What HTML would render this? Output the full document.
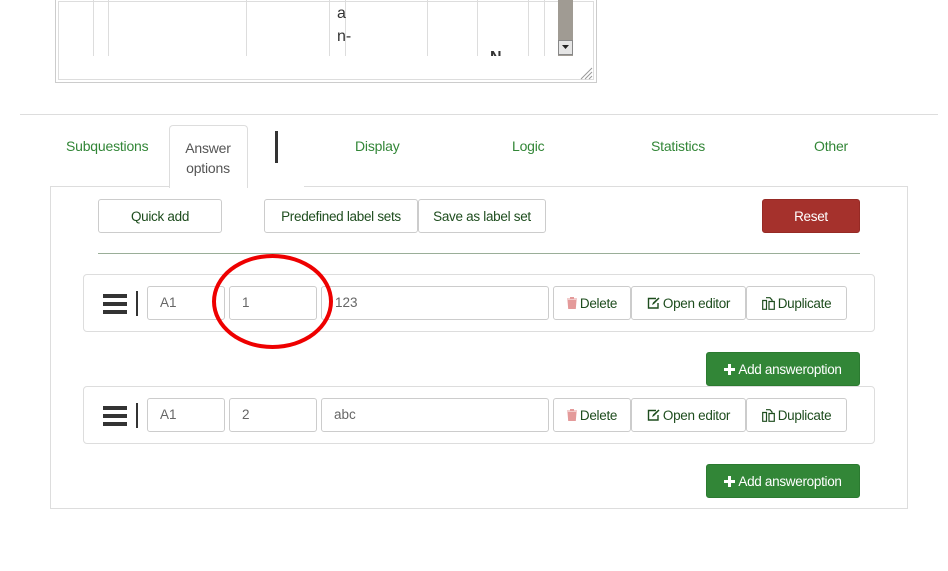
<!DOCTYPE html>
<html><head><meta charset="utf-8"><style>
*{box-sizing:border-box}
body{margin:0;width:948px;height:571px;background:#fff;font-family:"Liberation Sans",sans-serif;position:relative;overflow:hidden;color:#333}
.a{position:absolute}
.vl{position:absolute;top:0;height:56px;width:1px;background:#ddd}
.btn{position:absolute;border:1px solid #ccc;border-radius:3px;background:#fff;color:#1e4d1e;font-size:13.5px;letter-spacing:-0.3px;display:flex;align-items:center;justify-content:center;height:34px}
.btn svg{margin-right:3px}
.inp{position:absolute;border:1px solid #ccc;border-radius:3px;height:34px;font-size:13.5px;color:#666;padding-left:12px;line-height:32px}
.row{position:absolute;left:83px;width:792px;height:58px;border:1px solid #ddd;border-radius:4px}
.green{background:#328637;color:#fff;border-color:#2b7a30}
.tab{position:absolute;color:#328637;font-size:14px;letter-spacing:-0.2px}
</style></head><body>
<div class="a" style="left:55px;top:-2px;width:542px;height:85px;border:1px solid #ccc;box-shadow:inset 0 0 0 2px #fff,inset 0 0 0 3px #ddd"></div>
<div class="vl" style="left:93px"></div><div class="vl" style="left:108px"></div><div class="vl" style="left:246px"></div><div class="vl" style="left:329px"></div><div class="vl" style="left:345px"></div><div class="vl" style="left:427px"></div><div class="vl" style="left:477px"></div><div class="vl" style="left:528px"></div><div class="vl" style="left:544px"></div>
<div class="a" style="left:337px;top:5px;font-size:16px">a</div>
<div class="a" style="left:337px;top:28px;font-size:16px">n-</div>
<div class="a" style="left:490px;top:49px;font-size:16px;height:7px;overflow:hidden;font-weight:bold">N</div>
<div class="a" style="left:558px;top:0;width:15px;height:56px;background:#a09b93"></div>
<div class="a" style="left:558px;top:40px;width:15px;height:15px;background:#e5e5e5;border:1px solid #888"></div>
<svg class="a" style="left:562px;top:45px" width="7" height="5"><path d="M0 0H7L3.5 4Z" fill="#222"/></svg>
<svg class="a" style="left:579px;top:66px" width="14" height="14"><path d="M2 13L13 2M6 13L13 6M10 13L13 10" stroke="#999" stroke-width="1"/></svg>
<div class="a" style="left:20px;top:114px;width:918px;height:1px;background:#ddd"></div>
<div class="a" style="left:50px;top:186px;width:858px;height:323px;border:1px solid #ddd"></div>
<div class="a" style="left:169px;top:125px;width:79px;height:63px;border:1px solid #ddd;border-bottom:none;border-radius:4px 4px 0 0;background:#fff"></div>
<div class="a" style="left:248px;top:186px;width:56px;height:2px;background:#fff"></div>
<div class="tab" style="left:66px;top:138px">Subquestions</div>
<div class="tab" style="left:185px;top:138px;color:#555;text-align:center;line-height:20px;width:46px">Answer options</div>
<div class="a" style="left:275px;top:131px;width:3px;height:32px;background:#333"></div>
<div class="tab" style="left:355px;top:138px">Display</div>
<div class="tab" style="left:512px;top:138px">Logic</div>
<div class="tab" style="left:651px;top:138px">Statistics</div>
<div class="tab" style="left:814px;top:138px">Other</div>
<div class="btn" style="left:98px;top:199px;width:124px">Quick add</div>
<div class="btn" style="left:264px;top:199px;width:154px">Predefined label sets</div>
<div class="btn" style="left:418px;top:199px;width:128px">Save as label set</div>
<div class="btn" style="left:762px;top:199px;width:98px;background:#a5312c;border-color:#962a25;color:#fff">Reset</div>
<div class="a" style="left:98px;top:253px;width:762px;height:1px;background:#9aae98"></div>

<div class="row" style="top:274px"></div>
<div class="row" style="top:386px"></div>

<div class="a" style="left:103px;top:294px;width:24px;height:4px;background:#333;box-shadow:0 8px 0 #333,0 16px 0 #333"></div>
<div class="a" style="left:136px;top:291px;width:2px;height:25px;background:#333"></div>
<div class="inp" style="left:147px;top:286px;width:78px">A1</div>
<div class="inp" style="left:229px;top:286px;width:88px">1</div>
<div class="inp" style="left:321px;top:286px;width:228px;padding-left:13px">123</div>

<div class="a" style="left:103px;top:406px;width:24px;height:4px;background:#333;box-shadow:0 8px 0 #333,0 16px 0 #333"></div>
<div class="a" style="left:136px;top:403px;width:2px;height:25px;background:#333"></div>
<div class="inp" style="left:147px;top:398px;width:78px">A1</div>
<div class="inp" style="left:229px;top:398px;width:88px">2</div>
<div class="inp" style="left:321px;top:398px;width:228px">abc</div>

<div class="btn" style="left:553px;top:286px;width:78px"><svg width="10" height="12"><path d="M0 2H10M3.5 2V0.5H6.5V2M1 3.5H9L8.3 12H1.7Z" fill="#e49a9a" stroke="#e49a9a" stroke-width="1"/></svg>Delete</div>
<div class="btn" style="left:631px;top:286px;width:115px"><svg width="13" height="12"><path d="M9 1.5H1.5V11H11V6" fill="none" stroke="#1e4d1e" stroke-width="1.4"/><path d="M5 8L6 5.5L11.5 0.5L12.5 1.5L7 7Z" fill="#1e4d1e"/></svg>Open editor</div>
<div class="btn" style="left:746px;top:286px;width:101px"><svg width="13" height="13"><path d="M0.7 3.5H4.5V12.3H0.7ZM4 0.7H8L10 3V4.5M7 4.5H12.3V12.3H7Z" fill="none" stroke="#1e4d1e" stroke-width="1.2"/></svg>Duplicate</div>
<div class="btn" style="left:553px;top:398px;width:78px"><svg width="10" height="12"><path d="M0 2H10M3.5 2V0.5H6.5V2M1 3.5H9L8.3 12H1.7Z" fill="#e49a9a" stroke="#e49a9a" stroke-width="1"/></svg>Delete</div>
<div class="btn" style="left:631px;top:398px;width:115px"><svg width="13" height="12"><path d="M9 1.5H1.5V11H11V6" fill="none" stroke="#1e4d1e" stroke-width="1.4"/><path d="M5 8L6 5.5L11.5 0.5L12.5 1.5L7 7Z" fill="#1e4d1e"/></svg>Open editor</div>
<div class="btn" style="left:746px;top:398px;width:101px"><svg width="13" height="13"><path d="M0.7 3.5H4.5V12.3H0.7ZM4 0.7H8L10 3V4.5M7 4.5H12.3V12.3H7Z" fill="none" stroke="#1e4d1e" stroke-width="1.2"/></svg>Duplicate</div>

<div class="btn green" style="left:706px;top:352px;width:154px"><svg width="11" height="11"><path d="M5.5 0V11M0 5.5H11" stroke="#fff" stroke-width="3"/></svg>Add answeroption</div>
<div class="btn green" style="left:706px;top:464px;width:154px"><svg width="11" height="11"><path d="M5.5 0V11M0 5.5H11" stroke="#fff" stroke-width="3"/></svg>Add answeroption</div>

<div class="a" style="left:212px;top:254px;width:121px;height:95px;border:4px solid #e00;border-radius:50%"></div>
</body></html>
